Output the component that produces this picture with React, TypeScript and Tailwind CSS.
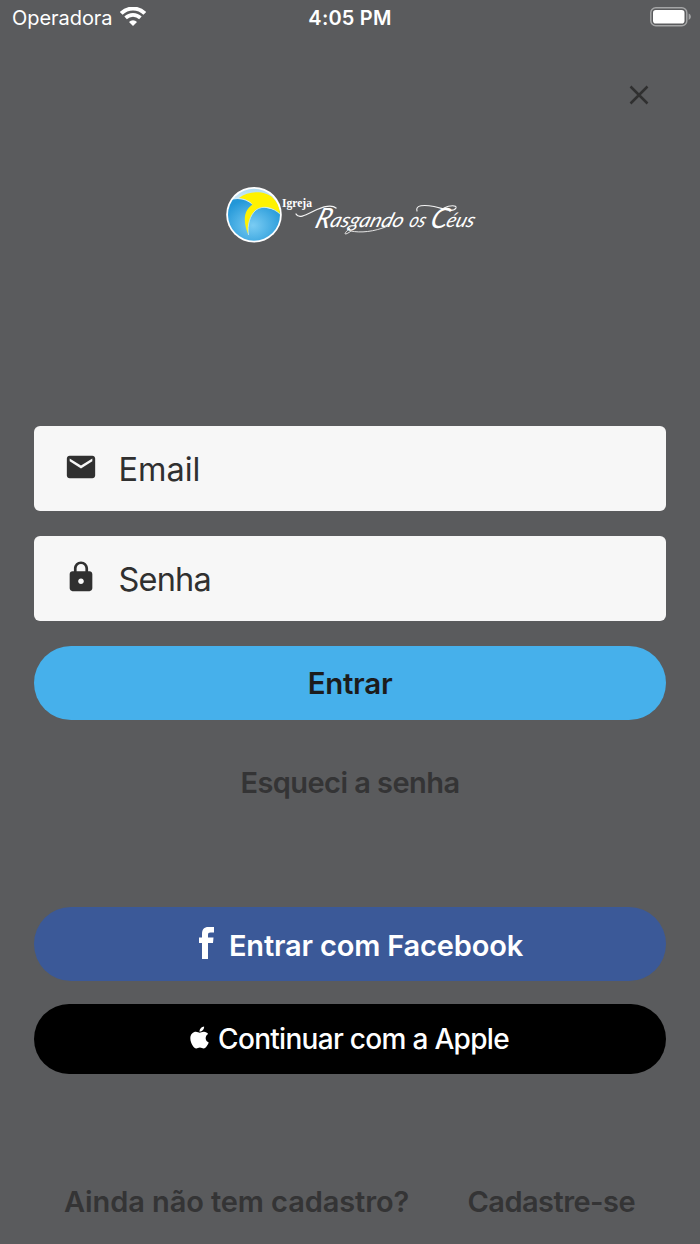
import React from "react";
import { MdEmail, MdLock } from "react-icons/md";
import { FaApple } from "react-icons/fa";

function StatusBar() {
  return (
    <header className="grid h-9 grid-cols-3 items-center pl-3 pr-[9px] text-white">
      <div className="flex items-center gap-[7px]">
        <span className="text-[20px] leading-9 tracking-[-0.05px]">Operadora</span>
        <svg width="26" height="19" viewBox="0 0 26 19" fill="none" stroke="currentColor" className="mt-[-3px]">
          <path d="M1.200 6.400a16.800 16.800 0 0 1 23.600 0" strokeWidth="4" />
          <path d="M5.600 10.900a10.600 10.600 0 0 1 14.800 0" strokeWidth="3.600" />
          <path d="M13 19l-4-4a5.700 5.700 0 0 1 8 0z" fill="currentColor" stroke="none" />
        </svg>
      </div>
      <span className="pr-[3px] text-center text-[20px] font-semibold leading-9 tracking-[0.2px]">4:05 PM</span>
      <div className="flex justify-end">
        <svg width="41" height="20" viewBox="0 0 41 20" className="mt-[-2px]">
          <rect x="0.8" y="0.8" width="36" height="18" rx="5" fill="none" stroke="#a4a5a6" strokeWidth="1.5" />
          <rect x="3" y="3" width="31.5" height="13.6" rx="2.8" fill="#fff" />
          <path d="M38.6 6.6c3 1.3 3 5.1 0 6.4z" fill="#a4a5a6" />
        </svg>
      </div>
    </header>
  );
}

function Logo() {
  return (
    <svg width="272" height="60" viewBox="215 185 272 60" className="overflow-visible" aria-label="Igreja Rasgando os Céus">
      <defs>
        <radialGradient id="globe" cx="0.5" cy="0.6" r="0.6">
          <stop offset="0" stopColor="#7accf3" />
          <stop offset="1" stopColor="#2297d8" />
        </radialGradient>
        <linearGradient id="sky" x1="0" y1="0" x2="0" y2="1">
          <stop offset="0" stopColor="#a9d9f1" />
          <stop offset="0.5" stopColor="#ffffff" />
        </linearGradient>
        <clipPath id="disc">
          <circle cx="254" cy="214.7" r="26" />
        </clipPath>
      </defs>
      <circle cx="254" cy="214.7" r="27.8" fill="#fff" />
      <g clipPath="url(#disc)">
        <rect x="226" y="187" width="56" height="56" fill="url(#sky)" />
        <path d="M226 202C235 197 245 198 253 205L280 211V243H226Z" fill="url(#globe)" />
        <path d="M239 198C249 190 266 191 273 198C278 203 280 208 281 215C273 207 263 205 256 210C250 215 247 225 248.500 235C243 222 243 211 252.500 204.500C250 201 245 198.500 239 198Z" fill="#fff200" />
        <path d="M281 215C273 207 263 205 256 210C250 215 247 225 248.500 235" fill="none" stroke="#ccecfa" strokeWidth="0.8" />
      </g>
      <text x="282" y="207.200" textLength="30" lengthAdjust="spacingAndGlyphs" fill="#fff" fontFamily="Liberation Serif, serif" fontWeight="700" fontSize="11.500">Igreja</text>
      <g fill="none" stroke="#f4f4f4" strokeLinecap="round">
        <path d="M296 214C299 220 309 213 317 209.500C325 206 332 204.500 336 208" strokeWidth="1.300" />
        <path d="M350 228C341 236 346 235 351 231C360 233 374 232 388 226" strokeWidth="0.9" />
        <path d="M417 211C415 205 424 204.500 434 206.500C445 209 453 213 456 208C457 205 450 205 444 208" strokeWidth="1.100" />
      </g>
      <g fill="#fff" fontFamily="Lato, sans-serif" fontStyle="italic" fontWeight="400" transform="translate(314 227) skewX(-18)">
        <text x="0" y="1" fontSize="28" textLength="15" lengthAdjust="spacingAndGlyphs">R</text>
        <text x="15" y="0" fontSize="20" textLength="73" lengthAdjust="spacingAndGlyphs">asgando</text>
        <text x="94" y="0" fontSize="20" textLength="16" lengthAdjust="spacingAndGlyphs">os</text>
        <text x="115" y="0.500" fontSize="28" textLength="17" lengthAdjust="spacingAndGlyphs">C</text>
        <text x="131" y="0" fontSize="20" textLength="28" lengthAdjust="spacingAndGlyphs">éus</text>
      </g>
    </svg>
  );
}

function Field({ icon, label, spacing }: { icon: React.ReactNode; label: string; spacing: string }) {
  return (
    <div className="flex h-[84.500px] items-center gap-[20.500px] rounded-[6px] bg-[#f7f7f7] pl-[30px] text-[#303030]">
      <span className="pb-[3px]">{icon}</span>
      <span className={`pt-[3px] text-[32.500px] font-[430] leading-10 ${spacing}`}>{label}</span>
    </div>
  );
}

export default function App() {
  return (
    <main className="flex h-[1244px] w-[700px] flex-col overflow-hidden bg-[#5a5b5d] font-['Inter',sans-serif]">
      <StatusBar />
      <div className="flex justify-end pr-[51px] pt-[49px]">
        <svg width="20" height="20" viewBox="0 0 20 20" stroke="#303030" strokeWidth="2.500">
          <path d="M1.500 1.500l17 17M18.500 1.500l-17 17" />
        </svg>
      </div>
      <div className="mt-20 flex justify-center pl-[2px]">
        <Logo />
      </div>
      <form className="mt-[181px] flex flex-col px-[34px]">
        <Field label="Email" spacing="tracking-[0px]" icon={<MdEmail size={34} />} />
        <div className="h-[25.500px]" />
        <Field label="Senha" spacing="tracking-[-0.8px]" icon={<MdLock size={34} />} />
        <button type="button" className="mt-[25px] h-[74.500px] rounded-full bg-[#46b0eb] pt-px text-[29.500px] font-[570] leading-9 tracking-[-0.3px] text-[#1c1c1c]">
          Entrar
        </button>
        <button type="button" className="mt-[43px] h-10 text-[29px] font-[570] leading-10 tracking-[-0.550px] text-[#343435]">
          Esqueci a senha
        </button>
        <button type="button" className="mt-[104px] flex h-[74px] items-center justify-center gap-[15px] rounded-full bg-[#3b5998] pl-[22px] text-white">
          <svg width="15" height="32" viewBox="0 0 15 32" fill="currentColor" className="mt-[-2px]">
            <path d="M3 32V16H0V10.500H3V7.200C3 2.500 5 0 9.500 0H15V5.500H11.500C9.500 5.500 9 6.300 9 8V10.500H14.500L14 16H9V32Z" />
          </svg>
          <span className="pt-[3px] text-[29px] font-[570] leading-9 tracking-[-0.170px]">Entrar com Facebook</span>
        </button>
        <button type="button" className="mt-[22.500px] flex h-[70.500px] items-center justify-center gap-[9px] rounded-full bg-black pr-px text-white">
          <FaApple size={25} className="mt-[-2px] w-[19px]" />
          <span className="text-[28px] font-medium leading-9 tracking-[-0.7px]">Continuar com a Apple</span>
        </button>
      </form>
      <footer className="mt-[108px] flex justify-between pl-16 pr-[65px] text-[29px] font-[570] leading-10 text-[#343435]">
        <span className="whitespace-nowrap tracking-[-0.1px]">Ainda não tem cadastro?</span>
        <span className="whitespace-nowrap tracking-[-0.550px]">Cadastre-se</span>
      </footer>
    </main>
  );
}
